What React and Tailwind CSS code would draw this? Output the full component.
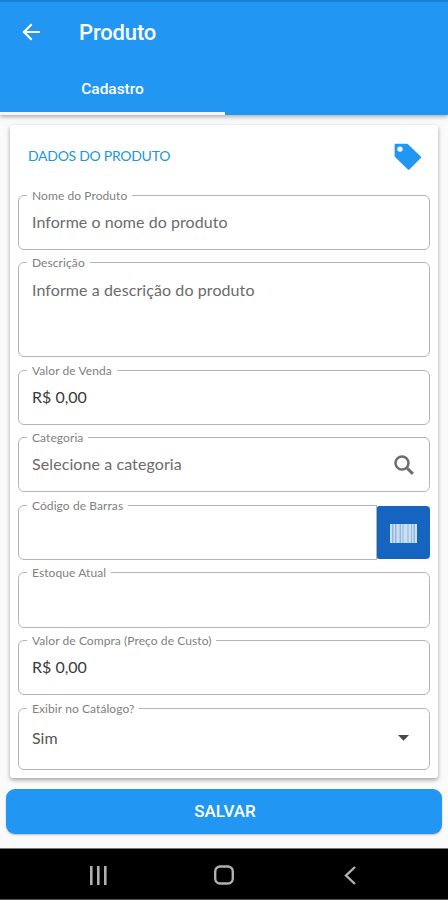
import React from "react";

function Field({ label, labelClass = "", className = "", children }) {
  return (
    <div className={`relative flex rounded-[6px] border border-[#b4b4b4] px-[13px] ${className}`}>
      <span
        className={`absolute -top-[8px] left-[8px] bg-white px-[5px] text-[12px] leading-[15px] tracking-[0.080px] whitespace-nowrap text-[#808080] ${labelClass}`}
      >
        {label}
      </span>
      {children}
    </div>
  );
}

function TagIcon() {
  return (
    <svg className="h-[28px] w-[28px]" viewBox="0 0 28 28">
      <path
        fill="#2196f3"
        fillRule="evenodd"
        d="M2 .8h10.700c.6 0 1.100.2 1.500.6L26.500 13.200c.7.7.7 1.300 0 2L15.700 26.200c-.6.7-1.300.7-2 0L1.200 14.300c-.4-.4-.6-.8-.6-1.400V2.200C.6 1.300 1.200.8 2 .8Zm4 2.600a2.700 2.700 0 1 0 0 5.400 2.700 2.700 0 0 0 0-5.400Z"
      />
    </svg>
  );
}

function BarcodeIcon() {
  return (
    <svg className="h-[19px] w-[27px]" viewBox="0 0 27 19">
      <rect width="27" height="19" fill="#8db8e2" />
      <path
        fill="#cbdff1"
        d="M0 0h2v19H0zM3.500 0h1.500v19H3.500zM6.500 0h3v19h-3zM11 0h1.500v19H11zM13.500 0h4v19h-4zM18.500 0h2.500v19h-2.500zM22 0h1.500v19H22zM25 0h2v19h-2z"
      />
    </svg>
  );
}

export default function App() {
  return (
    <div className="flex h-[900px] w-[448px] flex-col overflow-hidden bg-[#fafafa] font-['Lato',sans-serif]">
      <header className="relative z-10 flex h-[115px] shrink-0 flex-col border-t-2 border-[#1c80d0] bg-[#2196f3] font-['Roboto',sans-serif] text-white shadow-[0_2px_4px_rgba(0,0,0,0.3)]">
        <div className="flex h-[60px] items-center pl-[22px]">
          <svg className="h-[18px] w-[19px]" viewBox="0 0 19 18" fill="none" stroke="white" strokeWidth="2.200">
            <path d="M18 9H2M9.700 1.200 1.900 9l7.800 7.800" />
          </svg>
          <h1 className="mt-[2px] ml-[38px] text-[22px] leading-[28px] font-medium tracking-[-0.150px]">Produto</h1>
        </div>
        <div className="flex w-[225px] flex-1 items-center justify-center border-b-[3px] border-[#f5f5f5] pt-[3px]">
          <span className="text-[15.500px] leading-[20px] font-medium tracking-[-0.050px]">Cadastro</span>
        </div>
      </header>

      <main className="mx-[10px] mt-[10px] flex h-[653px] shrink-0 flex-col rounded-[3px] bg-white px-[8px] shadow-[0_2px_4px_rgba(0,0,0,0.35)]">
        <div className="flex h-[70px] shrink-0 items-start justify-between pr-[8px] pl-[10px]">
          <h2 className="mt-[21px] text-[14px] leading-[20px] tracking-[-0.280px] text-[#2196d8]">DADOS DO PRODUTO</h2>
          <div className="mt-[18px]">
            <TagIcon />
          </div>
        </div>
        <Field label="Nome do Produto" className="h-[55px] items-center pb-[2px]">
          <span className="text-[16px] tracking-[0.050px] text-[#6b6b6b]">Informe o nome do produto</span>
        </Field>
        <Field label="Descrição" className="mt-[12px] h-[95px] items-start pt-[15px]">
          <span className="text-[16px] leading-[24px] tracking-[0.090px] text-[#6b6b6b]">Informe a descrição do produto</span>
        </Field>
        <Field label="Valor de Venda" className="mt-[13px] h-[55px] items-center pb-[2px]">
          <span className="text-[16px] text-[#3a3a3a]">R$ 0,00</span>
        </Field>
        <Field label="Categoria" className="mt-[12px] h-[55px] items-center justify-between">
          <span className="-mt-[2px] text-[16px] tracking-[0.090px] text-[#6b6b6b]">Selecione a categoria</span>
          <svg className="mr-[2px] h-[20px] w-[20px]" viewBox="0 0 20 20" fill="none" stroke="#6e6e6e">
            <circle cx="8" cy="8" r="6.500" strokeWidth="2.500" />
            <path d="m12.700 12.700 6.200 6.200" strokeWidth="3" />
          </svg>
        </Field>
        <div className="mt-[13px] flex h-[55px]">
          <Field label="Código de Barras" className="h-[55px] flex-1 rounded-r-none" />
          <button className="mt-px flex h-[53px] w-[53px] items-center justify-center rounded-r-[4px] rounded-l-[2px] bg-[#1565c0] pt-[2px]">
            <BarcodeIcon />
          </button>
        </div>
        <Field label="Estoque Atual" className="mt-[12px] h-[56px]" />
        <Field label="Valor de Compra (Preço de Custo)" className="mt-[12px] h-[55px] items-center pb-[2px]">
          <span className="text-[16px] text-[#3a3a3a]">R$ 0,00</span>
        </Field>
        <Field label="Exibir no Catálogo?" className="mt-[13px] h-[62px] items-center justify-between pb-[2px]">
          <span className="text-[16px] text-[#555]">Sim</span>
          <svg className="mr-[7px] h-[6px] w-[11px]" viewBox="0 0 11 6">
            <path d="M0 0h11L5.500 5.800Z" fill="#484848" />
          </svg>
        </Field>
      </main>

      <button className="mx-[6px] mt-[11px] flex h-[45px] shrink-0 items-center justify-center rounded-[9px] bg-[#2196f3] pl-[2px] font-['Roboto',sans-serif] text-[17px] font-medium text-white shadow-[0_1px_2px_rgba(0,0,0,0.25)]">
        SALVAR
      </button>

      <nav className="mt-auto flex h-[52px] shrink-0 items-center border-y border-t-[#777] border-b-[#555] bg-black pl-[89px]">
        <svg className="mt-[2px] h-[19px] w-[19px]" viewBox="0 0 19 19" fill="#b0b0b0">
          <path d="M1 0h2.600v19H1zM8 0h2.600v19H8zM15 0h2.600v19H15z" />
        </svg>
        <svg className="mt-[2px] ml-[106px] h-[20px] w-[21px]" viewBox="0 0 21 20" fill="none" stroke="#b0b0b0" strokeWidth="2.400">
          <rect x="1.200" y="1.500" width="17.600" height="17" rx="5" />
        </svg>
        <svg className="mt-[2px] ml-[109px] h-[19px] w-[12px]" viewBox="0 0 12 19" fill="none" stroke="#b0b0b0" strokeWidth="2.400">
          <path d="M11 1 2 9.500l9 8.500" />
        </svg>
      </nav>
    </div>
  );
}
